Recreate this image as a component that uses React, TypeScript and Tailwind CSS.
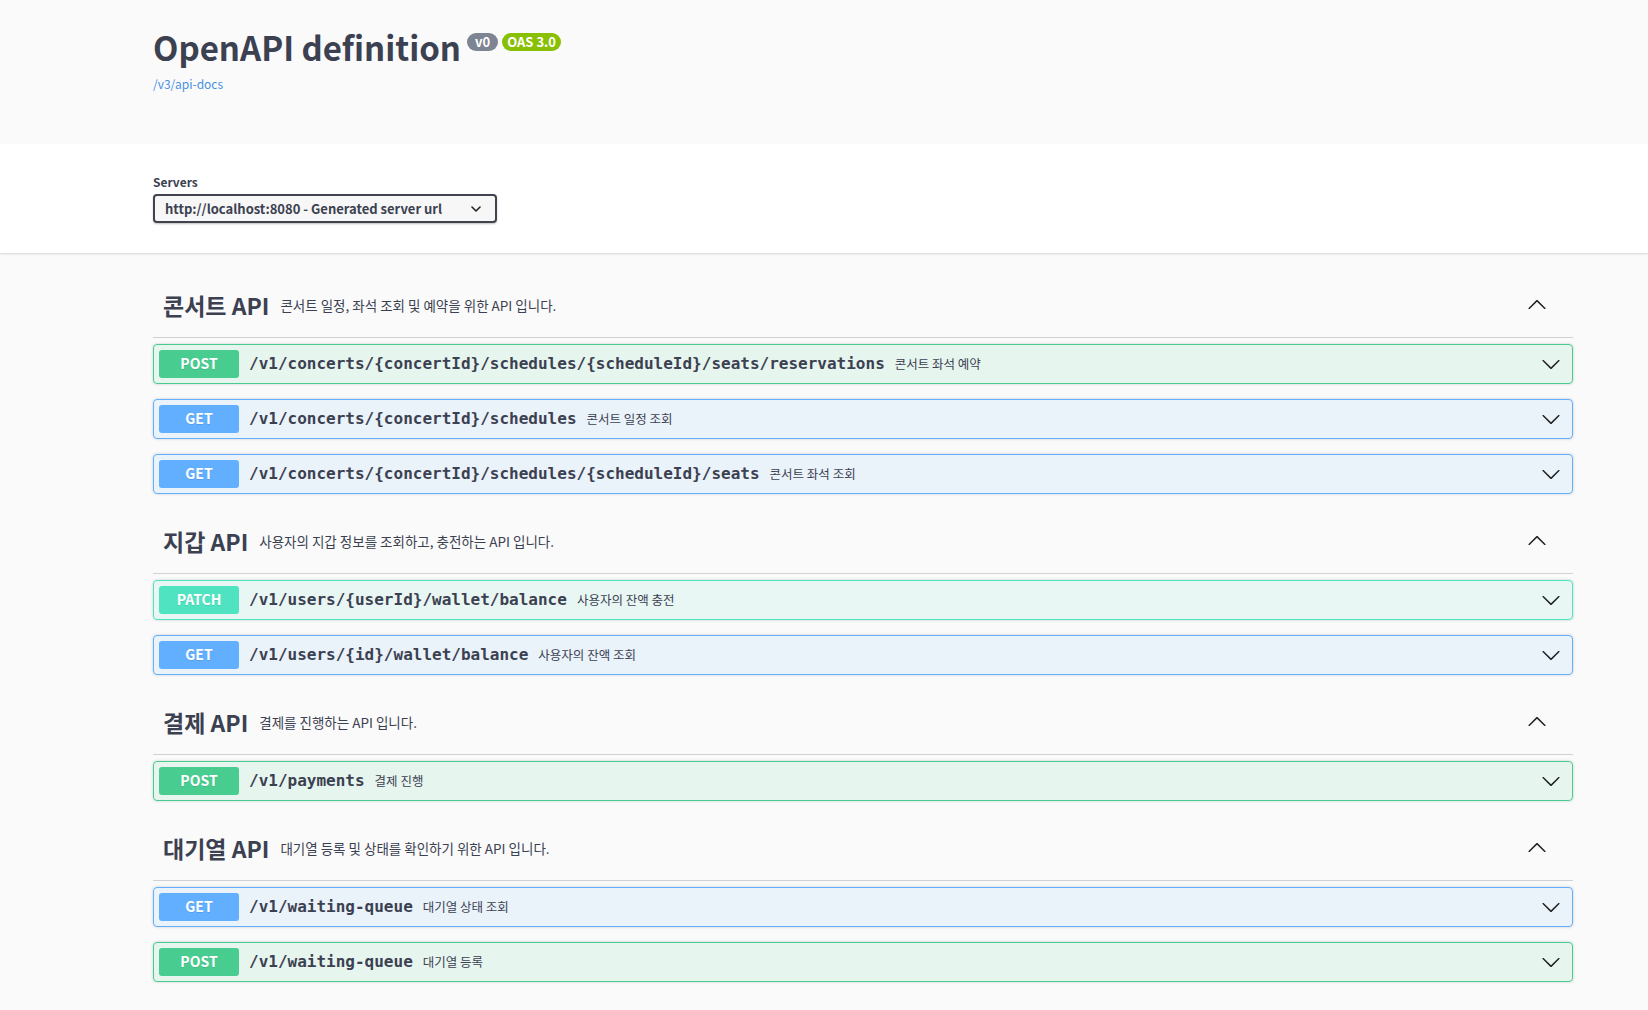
import React from "react";

const SANS = '"Noto Sans CJK KR", "Noto Sans", sans-serif';
const MONO = '"DejaVu Sans Mono", "Liberation Mono", monospace';

type Method = "POST" | "GET" | "PATCH";

const styles: Record<Method, { block: string; badge: string }> = {
  POST: {
    block: "bg-[rgba(73,204,144,0.1)] border-[#49cc90]",
    badge: "bg-[#49cc90]",
  },
  GET: {
    block: "bg-[rgba(97,175,254,0.1)] border-[#61affe]",
    badge: "bg-[#61affe]",
  },
  PATCH: {
    block: "bg-[rgba(80,227,194,0.1)] border-[#50e3c2]",
    badge: "bg-[#50e3c2]",
  },
};

const ArrowDown = ({ up = false }: { up?: boolean }) => (
  <svg
    width="20"
    height="20"
    viewBox="0 0 20 20"
    className={up ? "rotate-180" : ""}
    fill="#1f1f1f"
  >
    <path d="M17.418 6.109c.272-.268.709-.268.979 0s.271.701 0 .969l-7.908 7.83c-.27.268-.707.268-.979 0l-7.908-7.83c-.27-.268-.27-.701 0-.969.271-.268.709-.268.979 0L10 13.25l7.418-7.141z" />
  </svg>
);

const Op = ({ method, path, desc }: { method: Method; path: string; desc: string }) => (
  <div
    className={`h-[40px] mb-[15px] border rounded-[4px] shadow-[0_0_3px_rgba(0,0,0,0.19)] flex items-center pl-[5px] pr-[5px] ${styles[method].block}`}
  >
    <div
      className={`w-[80px] h-[28px] pb-[2px] rounded-[3px] flex items-center justify-center text-white text-[14px] font-bold shrink-0 [text-shadow:0_1px_0_rgba(0,0,0,0.1)] ${styles[method].badge}`}
    >
      {method}
    </div>
    <span
      className="pl-[10px] pr-[10px] text-[16px] font-bold text-[#3b4151] whitespace-nowrap"
      style={{ fontFamily: MONO }}
    >
      {path}
    </span>
    <span className="text-[12.5px] text-[#3b4151] whitespace-nowrap">{desc}</span>
    <div className="flex-1" />
    <div className="mr-[6px] flex items-center">
      <ArrowDown />
    </div>
  </div>
);

const Tag = ({ name, desc }: { name: string; desc: string }) => (
  <div className="h-[65px] mb-[6px] border-b border-[rgba(59,65,81,0.22)] flex items-center pl-[10px] pr-[26px]">
    <span className="text-[23px] font-bold text-[#3b4151] whitespace-nowrap">{name}</span>
    <span className="pl-[11px] text-[13.5px] text-[#3b4151] whitespace-nowrap">{desc}</span>
    <div className="flex-1" />
    <ArrowDown up />
  </div>
);

export default function App() {
  return (
    <div className="bg-[#fafafa] min-h-[1010px] w-full" style={{ fontFamily: SANS }}>
      <div className="h-[144px] pl-[153px] pt-[25px]">
        <div className="flex items-start">
          <h2 className="text-[33px] leading-[44px] font-bold text-[#3b4151] whitespace-nowrap">
            OpenAPI definition
          </h2>
          <span className="ml-[6px] mt-[8px] h-[18px] px-[8px] rounded-full bg-[#7d8492] text-white text-[13px] font-bold leading-[18px]">
            v0
          </span>
          <span className="ml-[4px] mt-[8px] h-[18px] px-[5px] rounded-full bg-[#89bf04] text-white text-[13px] font-bold leading-[18px]">
            OAS 3.0
          </span>
        </div>
        <a className="block mt-[7px] text-[12px] leading-[16px] text-[#4990e2]">/v3/api-docs</a>
      </div>

      <div className="bg-white h-[109px] shadow-[0_1px_2px_0_rgba(0,0,0,0.15)] pl-[153px] pt-[30px] relative">
        <div className="text-[12px] leading-[16px] font-bold text-[#3b4151]">Servers</div>
        <div className="mt-[4px] w-[344px] h-[29px] border-2 border-[#41444e] rounded-[4px] shadow-[0_1px_2px_0_rgba(0,0,0,0.25)] bg-[#f7f7f7] flex items-center pl-[10px] pr-[14px]">
          <span className="text-[13px] font-bold text-[#3b4151] whitespace-nowrap">
            http://localhost:8080 - Generated server url
          </span>
          <div className="flex-1" />
          <svg width="10" height="6" viewBox="0 0 10 6" fill="none">
            <path d="M1 1l4 4 4-4" stroke="#222" strokeWidth="1.6" strokeLinecap="round" strokeLinejoin="round" />
          </svg>
        </div>
      </div>

      <div className="pl-[153px] pr-[75px] pt-[20px]">
        <Tag name="콘서트 API" desc="콘서트 일정, 좌석 조회 및 예약을 위한 API 입니다." />
        <Op method="POST" path="/v1/concerts/{concertId}/schedules/{scheduleId}/seats/reservations" desc="콘서트 좌석 예약" />
        <Op method="GET" path="/v1/concerts/{concertId}/schedules" desc="콘서트 일정 조회" />
        <Op method="GET" path="/v1/concerts/{concertId}/schedules/{scheduleId}/seats" desc="콘서트 좌석 조회" />

        <Tag name="지갑 API" desc="사용자의 지갑 정보를 조회하고, 충전하는 API 입니다." />
        <Op method="PATCH" path="/v1/users/{userId}/wallet/balance" desc="사용자의 잔액 충전" />
        <Op method="GET" path="/v1/users/{id}/wallet/balance" desc="사용자의 잔액 조회" />

        <Tag name="결제 API" desc="결제를 진행하는 API 입니다." />
        <Op method="POST" path="/v1/payments" desc="결제 진행" />

        <Tag name="대기열 API" desc="대기열 등록 및 상태를 확인하기 위한 API 입니다." />
        <Op method="GET" path="/v1/waiting-queue" desc="대기열 상태 조회" />
        <Op method="POST" path="/v1/waiting-queue" desc="대기열 등록" />
      </div>
    </div>
  );
}
